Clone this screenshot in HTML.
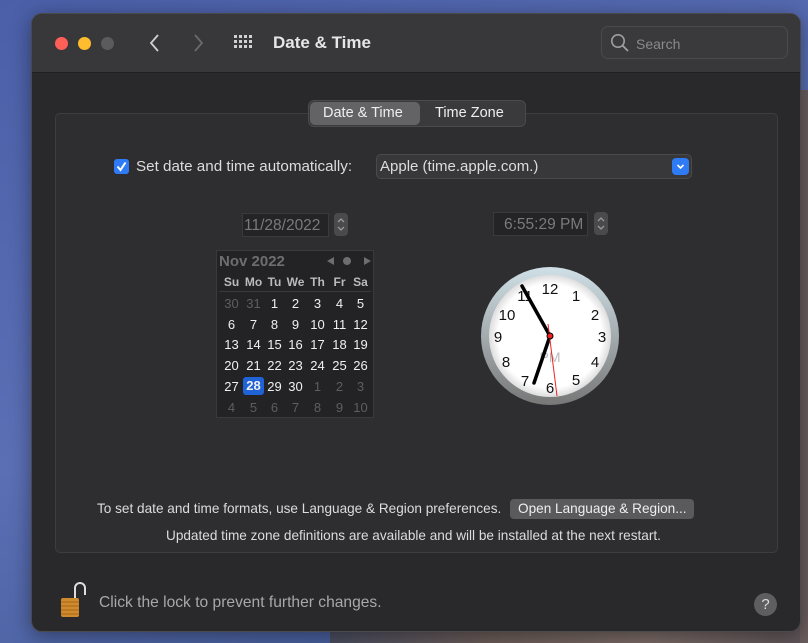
<!DOCTYPE html>
<html><head><meta charset="utf-8"><style>
*{margin:0;padding:0;box-sizing:border-box}
body{width:808px;height:643px;overflow:hidden;font-family:"Liberation Sans",sans-serif;position:relative;
background:linear-gradient(160deg,#4a5fa8 0%,#5b6fb5 50%,#3e568f 100%);}
.rock{position:absolute;left:330px;top:560px;width:478px;height:83px;background:linear-gradient(90deg,#4a4d60,#6b5c58,#7a6a66,#5e5458);}
.rock2{position:absolute;left:800px;top:90px;width:8px;height:553px;background:#6a5d5e}
.win{position:absolute;left:31px;top:13px;width:770px;height:619px;background:#29292b;border-radius:11px;border:1px solid #4a4a4c;overflow:hidden;box-shadow:0 4px 20px rgba(0,0,0,.4)}
.tb{position:absolute;left:0;top:0;width:100%;height:59px;background:#38383b;border-bottom:1px solid #1f1f21}
.dot{position:absolute;top:23px;width:13px;height:13px;border-radius:50%}
.t{position:absolute;white-space:nowrap;color:#dcdcdc}
.box{position:absolute;left:23px;top:99px;width:723px;height:440px;background:#2e2e31;border:1px solid #3d3d40;border-radius:5px}
.cal{position:absolute;left:184px;top:236px;width:158px;height:168px;background:#232325;border:1px solid #3a3a3c}
.cell{position:absolute;width:21px;text-align:center;font-size:13px;color:#f0f0f0}
.spin{position:absolute;width:14px;height:23px;background:#4a4a4d;border-radius:4px}
</style></head><body>
<div class="rock"></div><div class="rock2"></div>
<div class="win">
 <div class="tb">
  <div class="dot" style="left:23px;background:#fe5f57"></div>
  <div class="dot" style="left:46px;background:#febc2e"></div>
  <div class="dot" style="left:69px;background:#5b5b5e"></div>
  <svg style="position:absolute;left:117px;top:19px" width="12" height="20"><path d="M9 2 L2 10 L9 18" stroke="#d0d0d0" stroke-width="1.8" fill="none"/></svg>
  <svg style="position:absolute;left:160px;top:19px" width="12" height="20"><path d="M3 2 L10 10 L3 18" stroke="#6a6a6c" stroke-width="1.8" fill="none"/></svg>
  <svg style="position:absolute;left:202px;top:21px" width="20" height="16" fill="#d0d0d0">
   <g><rect x="0" y="0" width="3" height="3"/><rect x="5" y="0" width="3" height="3"/><rect x="10" y="0" width="3" height="3"/><rect x="15" y="0" width="3" height="3"/>
   <rect x="0" y="5" width="3" height="3"/><rect x="5" y="5" width="3" height="3"/><rect x="10" y="5" width="3" height="3"/><rect x="15" y="5" width="3" height="3"/>
   <rect x="0" y="10" width="3" height="3"/><rect x="5" y="10" width="3" height="3"/><rect x="10" y="10" width="3" height="3"/><rect x="15" y="10" width="3" height="3"/></g></svg>
  <div class="t" style="left:241px;top:19px;font-size:17px;font-weight:bold;color:#e6e6e6">Date &amp; Time</div>
  <div style="position:absolute;left:569px;top:12px;width:187px;height:33px;border:1px solid #4a4a4d;border-radius:7px;background:#3a3a3d"></div>
  <svg style="position:absolute;left:578px;top:19px" width="20" height="20"><circle cx="8" cy="8" r="6.2" stroke="#a0a0a0" stroke-width="1.6" fill="none"/><path d="M12.5 12.5 L18 18" stroke="#a0a0a0" stroke-width="1.8"/></svg>
  <div class="t" style="left:604px;top:22px;font-size:14px;color:#8a8a8c">Search</div>
 </div>
 <div class="box"></div>
 <div style="position:absolute;left:276px;top:86px;width:218px;height:27px;background:#3a3a3d;border:1px solid #4a4a4d;border-radius:6px"></div>
 <div style="position:absolute;left:278px;top:88px;width:110px;height:23px;background:#636366;border-radius:5px"></div>
 <div class="t" style="left:291px;top:91px;font-size:14.5px;color:#eee">Date &amp; Time</div>
 <div class="t" style="left:403px;top:91px;font-size:14.5px;color:#eee">Time Zone</div>

 <div style="position:absolute;left:82px;top:145px;width:15px;height:15px;background:#2f7bf5;border-radius:3px"></div>
 <svg style="position:absolute;left:82px;top:145px" width="15" height="15"><path d="M3.5 7.5 L6.5 11 L11.5 3.5" stroke="#fff" stroke-width="2" fill="none"/></svg>
 <div class="t" style="left:104px;top:144px;font-size:15.2px">Set date and time automatically:</div>
 <div style="position:absolute;left:344px;top:140px;width:316px;height:25px;background:#38383b;border:1px solid #4a4a4d;border-radius:5px"></div>
 <div class="t" style="left:348px;top:144px;font-size:15px">Apple (time.apple.com.)</div>
 <div style="position:absolute;left:640px;top:144px;width:17px;height:17px;background:#2f7bf5;border-radius:4px"></div>
 <svg style="position:absolute;left:640px;top:144px" width="17" height="17"><path d="M5.5 7 L8.5 10 L11.5 7" stroke="#fff" stroke-width="1.6" fill="none"/></svg>

 <div style="position:absolute;left:210px;top:199px;width:87px;height:24px;background:#242426;border:1px solid #3a3a3c"></div>
 <div class="t" style="left:212px;top:203px;font-size:15.5px;color:#7a7a7c">11/28/2022</div>
 <div class="spin" style="left:302px;top:199px"></div>
 <svg style="position:absolute;left:302px;top:199px" width="14" height="23"><path d="M4 9 L7 6 L10 9 M4 14 L7 17 L10 14" stroke="#999" stroke-width="1.3" fill="none"/></svg>
 <div style="position:absolute;left:461px;top:198px;width:95px;height:24px;background:#242426;border:1px solid #3a3a3c"></div>
 <div class="t" style="left:472px;top:202px;font-size:15.5px;color:#7a7a7c">6:55:29 PM</div>
 <div class="spin" style="left:562px;top:198px"></div>
 <svg style="position:absolute;left:562px;top:198px" width="14" height="23"><path d="M4 9 L7 6 L10 9 M4 14 L7 17 L10 14" stroke="#999" stroke-width="1.3" fill="none"/></svg>

 <div class="cal">
  <div class="t" style="left:2px;top:2px;font-size:15px;font-weight:bold;color:#6e6e70">Nov 2022</div>
  <svg style="position:absolute;left:110px;top:5px" width="44" height="12" fill="#6e6e70"><path d="M0 5 L7 1 V9Z"/><circle cx="20" cy="5" r="4"/><path d="M44 5 L37 1 V9Z"/></svg>
  <div style="position:absolute;left:2px;top:40px;width:152px;height:1px;background:#3a3a3c"></div>
 </div>
 <div id="cal"></div>

 <svg style="position:absolute;left:448px;top:252px" width="140" height="140">
  <defs><linearGradient id="g" x1="0" y1="0" x2="0" y2="1"><stop offset="0" stop-color="#cfe0e6"/><stop offset="1" stop-color="#777"/></linearGradient>
  <radialGradient id="f" cx=".5" cy=".5" r=".5"><stop offset=".85" stop-color="#fff"/><stop offset="1" stop-color="#ddd"/></radialGradient></defs>
  <circle cx="70" cy="70" r="69" fill="url(#g)"/>
  <circle cx="70" cy="70" r="61" fill="url(#f)"/>
  <g font-family="Liberation Sans" font-size="15" fill="#111" text-anchor="middle">
   <text x="70" y="28">12</text><text x="96" y="35">1</text><text x="115" y="54">2</text><text x="122" y="76">3</text>
   <text x="115" y="101">4</text><text x="96" y="119">5</text><text x="70" y="127">6</text><text x="45" y="120">7</text>
   <text x="26" y="101">8</text><text x="18" y="76">9</text><text x="27" y="54">10</text><text x="45" y="35">11</text>
  </g>
  <text x="70" y="96" font-family="Liberation Sans" font-size="14" fill="#bbb" text-anchor="middle">PM</text>
  <path d="M70 70 L42 20" stroke="#000" stroke-width="3.5" stroke-linecap="round"/>
  <path d="M70 70 L54 117" stroke="#000" stroke-width="3.5" stroke-linecap="round"/>
  <path d="M68 58 L77 130" stroke="#e22" stroke-width="1"/>
  <circle cx="70" cy="70" r="3" fill="#e22" stroke="#000" stroke-width="1"/>
 </svg>

 <div class="t" style="left:65px;top:487px;font-size:13.6px">To set date and time formats, use Language &amp; Region preferences.</div>
 <div style="position:absolute;left:478px;top:485px;width:184px;height:20px;background:#5a5a5d;border-radius:4px"></div>
 <div class="t" style="left:486px;top:487px;font-size:13.6px;color:#eee">Open Language &amp; Region...</div>
 <div class="t" style="left:134px;top:514px;font-size:13.6px">Updated time zone definitions are available and will be installed at the next restart.</div>

 <svg style="position:absolute;left:26px;top:565px" width="30" height="40">
  <path d="M17 20 V9 A5 5 0 0 1 27 9 V16" stroke="#ddd" stroke-width="2" fill="none"/>
  <rect x="3" y="19" width="18" height="19" rx="2" fill="#d08a2e"/>
  <g stroke="#a86418" stroke-width="1"><path d="M3 23H21M3 27H21M3 31H21M3 35H21"/></g>
 </svg>
 <div class="t" style="left:67px;top:580px;font-size:15.6px;color:#a8a8aa">Click the lock to prevent further changes.</div>
 <div style="position:absolute;left:722px;top:579px;width:23px;height:23px;border-radius:50%;background:#5e5e61;color:#ddd;font-size:15px;text-align:center;line-height:23px">?</div>
</div>
<script>
var c=document.getElementById('cal'),h='';
var xs=[199,221,242,263,285,307,328];
var wd=['Su','Mo','Tu','We','Th','Fr','Sa'];
wd.forEach(function(d,i){h+='<div class="cell" style="left:'+(xs[i]-11)+'px;width:23px;top:261px;font-weight:bold;font-size:12px;color:#bbb">'+d+'</div>';});
var days=[[30,31,1,2,3,4,5],[6,7,8,9,10,11,12],[13,14,15,16,17,18,19],[20,21,22,23,24,25,26],[27,28,29,30,1,2,3],[4,5,6,7,8,9,10]];
days.forEach(function(r,ri){r.forEach(function(d,i){
 var dim=(ri==0&&i<2)||(ri==4&&i>3)||ri==5;
 var y=282+ri*20.7;
 var st='left:'+(xs[i]-10)+'px;top:'+y+'px;'+(dim?'color:#5e5e60;':'');
 if(ri==4&&i==1)st+='background:#1f63d6;border-radius:3px;font-weight:bold;height:18px;line-height:18px;top:'+(y-2)+'px;';
 h+='<div class="cell" style="'+st+'">'+d+'</div>';});});
c.innerHTML=h;
</script>
</body></html>
